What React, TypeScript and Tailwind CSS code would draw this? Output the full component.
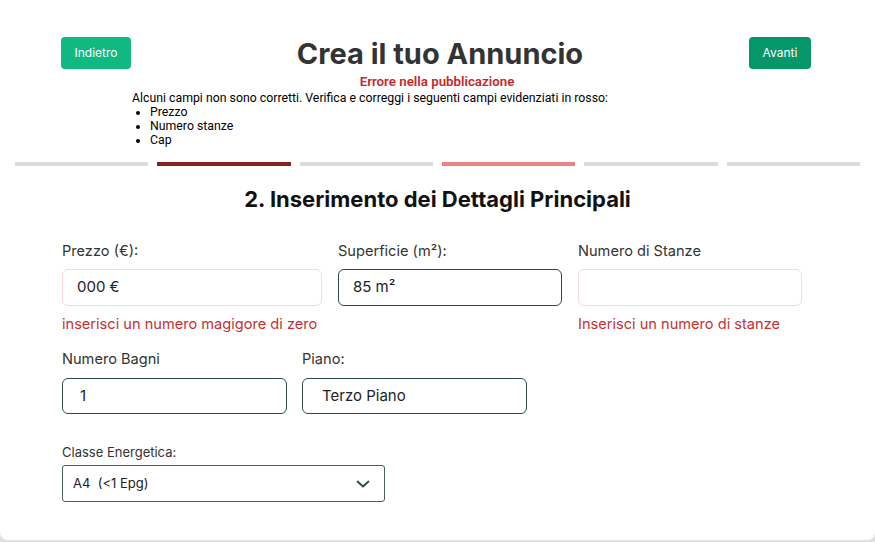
export default function App() {
  const steps = ['done', 'current', 'todo', 'error', 'todo', 'todo'];

  return (
    <div className="min-h-[542px] bg-[#e0e0e0] font-['Inter',sans-serif]">
      <div className="h-[540px] bg-white rounded-b-lg">
        {/* Header */}
        <div className="flex items-start pl-[61px] pr-[64px] pt-[37px]">
          <button className="w-[70px] h-[32px] rounded bg-[#10b981] text-white text-xs">
            Indietro
          </button>
          <div className="flex-1">
            <h1 className="text-center text-[29px] leading-[34px] font-bold text-[#333333]">
              Crea il tuo Annuncio
            </h1>
            <div className="font-['Roboto',sans-serif] mt-[3px]">
              <p className="text-center text-[13.3px] font-semibold text-[#c62828] pr-[6px] leading-[15px]">
                Errore nella pubblicazione
              </p>
              <p className="text-[12.3px] leading-[14px] text-black ml-px mt-[2px]">
                Alcuni campi non sono corretti. Verifica e correggi i seguenti campi evidenziati in rosso:
              </p>
              <ul className="list-disc pl-[19px] text-[12.3px] leading-[14px] text-black">
                <li>Prezzo</li>
                <li>Numero stanze</li>
                <li>Cap</li>
              </ul>
            </div>
          </div>
          <button className="w-[62px] h-[32px] rounded bg-[#059669] text-white text-xs">
            Avanti
          </button>
        </div>

        {/* Progress */}
        <div className="flex gap-[9px] px-[15px] mt-[15px]">
          {steps.map((s, i) => (
            <div
              key={i}
              className={`flex-1 h-[4px] ${
                s === 'current' ? 'bg-[#8b1f1f]' : s === 'error' ? 'bg-[#e98484]' : 'bg-[#dcdcdc]'
              }`}
            />
          ))}
        </div>

        <h2 className="text-center text-[22px] leading-[28px] font-bold text-[#111] mt-[19px]">
          2. Inserimento dei Dettagli Principali
        </h2>

        {/* Form */}
        <div className="pl-[62px] mt-[29px] text-[#333]">
          <div className="flex items-start gap-4">
            <div className="w-[260px]">
              <label className="block text-[14.6px] leading-[18px]">Prezzo (€):</label>
              <div className="mt-[9px] h-[37px] border border-[#fcd9d9] rounded-md flex items-center px-[14px] text-[15px] text-[#222]">
                000 €
              </div>
              <p className="mt-[9px] text-[14.6px] leading-[18px] whitespace-nowrap text-[#c53030]">
                inserisci un numero magigore di zero
              </p>
            </div>
            <div className="w-[224px]">
              <label className="block text-[14.6px] leading-[18px]">Superficie (m²):</label>
              <div className="mt-[9px] h-[37px] border border-[#2e4a40] rounded-md flex items-center px-[14px] text-[15px] text-[#222]">
                85 m²
              </div>
            </div>
            <div className="w-[224px]">
              <label className="block text-[14.6px] leading-[18px]">Numero di Stanze</label>
              <div className="mt-[9px] h-[37px] border border-[#fcd9d9] rounded-md" />
              <p className="mt-[9px] text-[14.6px] leading-[18px] whitespace-nowrap text-[#c53030]">
                Inserisci un numero di stanze
              </p>
            </div>
          </div>

          <div className="flex gap-[15px] mt-[17px]">
            <div className="w-[225px]">
              <label className="block text-[14.6px] leading-[18px]">Numero Bagni</label>
              <div className="mt-[10px] h-[36px] border border-[#2e4a40] rounded-md flex items-center px-[17px] text-[15px] text-[#222]">
                1
              </div>
            </div>
            <div className="w-[225px]">
              <label className="block text-[14.6px] leading-[18px]">Piano:</label>
              <div className="mt-[10px] h-[36px] border border-[#2e4a40] rounded-md flex items-center px-[19px] text-[15px] text-[#222]">
                Terzo Piano
              </div>
            </div>
          </div>

          <div className="mt-[30px] w-[323px]">
            <label className="block text-[13px] leading-[16px] text-[#333]">Classe Energetica:</label>
            <div className="mt-[5px] h-[37px] border border-[#4a5f58] rounded-[3px] flex items-center justify-between pl-[10px] pr-[14px] text-[13px] text-[#222]">
              <span className="whitespace-pre">A4  (&lt;1 Epg)</span>
              <svg width="14" height="8" viewBox="0 0 14 8" fill="none">
                <polyline points="1.5,1.5 7,6.5 12.5,1.5" stroke="#1f4d3a" strokeWidth="1.8" strokeLinecap="round" strokeLinejoin="round" />
              </svg>
            </div>
          </div>
        </div>
      </div>
    </div>
  );
}
